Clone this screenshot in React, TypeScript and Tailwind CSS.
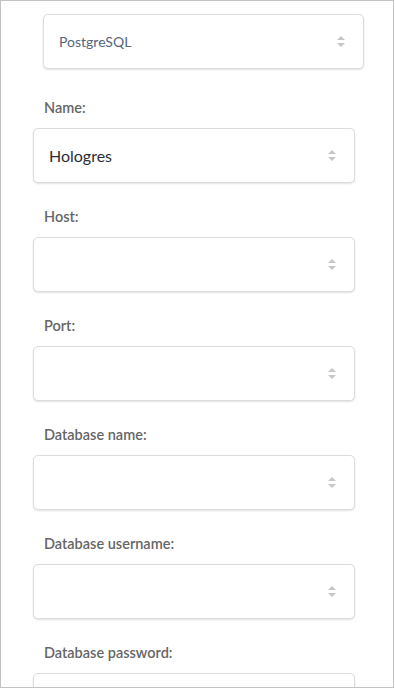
import React from 'react';

const fields = [
  { label: 'Name:', value: 'Hologres' },
  { label: 'Host:', value: '' },
  { label: 'Port:', value: '' },
  { label: 'Database name:', value: '' },
  { label: 'Database username:', value: '' },
  { label: 'Database password:', value: '' },
];

function Arrows() {
  return (
    <svg width="8" height="11" viewBox="0 0 8 11" className="shrink-0">
      <path d="M4 0 L8 4 L0 4 Z" fill="#c6c6c6" />
      <path d="M0 7 L8 7 L4 11 Z" fill="#c6c6c6" />
    </svg>
  );
}

function Box({ value, className }: { value: string; className: string }) {
  return (
    <div
      className={`flex h-[55px] items-center justify-between rounded-[5px] border border-[#dcdcdc] bg-white pl-[15px] pr-[18px] shadow-[0_1px_2px_rgba(0,0,0,0.12)] ${className}`}
    >
      <span>{value}</span>
      <Arrows />
    </div>
  );
}

function App() {
  return (
    <div className="min-h-screen bg-white font-['Lato',sans-serif]">
      <div className="h-[688px] w-[394px] overflow-hidden border border-[#c2c2c2] bg-white pl-[32px] pt-[13px]">
        <Box
          value="PostgreSQL"
          className="ml-[10px] h-[54px] w-[321px] text-[14px] text-[#56657a]"
        />
        <div className="mt-[31px] flex flex-col gap-[26px]">
          {fields.map((f) => (
            <div key={f.label}>
              <div className="pl-[11px] text-[14.5px] leading-[16px] font-semibold text-[#666666]">
                {f.label}
              </div>
              <Box
                value={f.value}
                className="mt-[12px] w-[322px] text-[16px] text-[#2b2f33]"
              />
            </div>
          ))}
        </div>
      </div>
    </div>
  );
}

export default App;
